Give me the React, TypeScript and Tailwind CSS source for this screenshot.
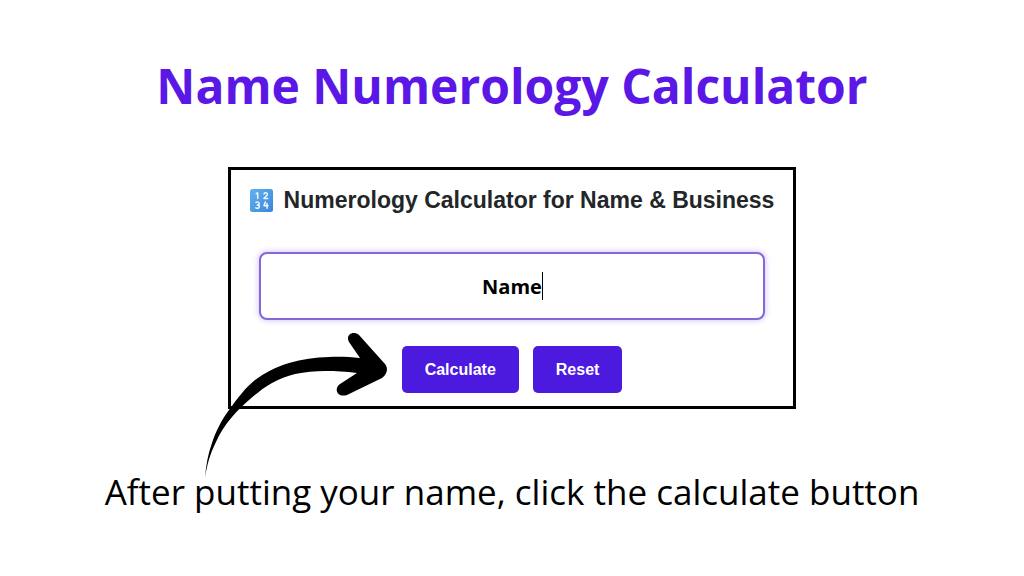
import { useState } from 'react'

export default function App() {
  const [name, setName] = useState('Name')

  return (
    <main className="min-h-screen bg-white flex flex-col items-center pt-[54px] font-['Open_Sans',sans-serif]">
      <h1 className="text-[48px] leading-16 font-bold text-[#5b17e5] whitespace-nowrap">
        Name Numerology Calculator
      </h1>

      <div className="relative mt-[49px] w-5/9">
        <Calculator name={name} onChange={setName} />
        <CurvedArrow />
      </div>

      <p className="mt-[59px] text-[35px] leading-12 text-black whitespace-nowrap">
        After putting your name, click the calculate button
      </p>
    </main>
  )
}

interface CalculatorProps {
  name: string
  onChange: (name: string) => void
}

function Calculator({ name, onChange }: CalculatorProps) {
  return (
    <form
      className="border-3 border-black px-7 pt-4 pb-[13px] font-['Liberation_Sans',sans-serif]"
      onSubmit={e => e.preventDefault()}
    >
      <h2 className="flex items-center justify-center gap-[11px] text-[23px] leading-7 font-bold text-[#222628] whitespace-nowrap">
        <NumbersIcon />
        Numerology Calculator for Name &amp; Business
      </h2>

      <div className="relative mt-[38px]">
        <input
          aria-label="Name"
          className="block w-full h-[68px] rounded-lg border-2 border-[#8468d6] bg-white text-center text-[20px] font-bold text-black font-['Open_Sans',sans-serif] outline-none shadow-[0_0_6px_rgba(124,77,255,0.4)]"
          value={name}
          onChange={e => onChange(e.target.value)}
        />
        {/* text cursor after the typed name */}
        <div className="absolute inset-0 flex items-center justify-center pointer-events-none text-[20px] font-bold font-['Open_Sans',sans-serif]">
          <span className="invisible">{name}</span>
          <span className="relative">
            <span className="absolute -top-3.5 left-0 w-px h-7 bg-black" />
          </span>
        </div>
      </div>

      <div className="mt-[26px] flex justify-center gap-3.5 text-base font-bold text-white">
        <button type="submit" className="h-[47px] px-[23px] rounded-[5px] bg-[#4c1adf]">
          Calculate
        </button>
        <button type="button" className="h-[47px] px-[23px] rounded-[5px] bg-[#4c1adf]" onClick={() => onChange('')}>
          Reset
        </button>
      </div>
    </form>
  )
}

function NumbersIcon() {
  return (
    <svg className="size-[23px] shrink-0" viewBox="0 0 23 23" fill="none" aria-hidden="true">
      <defs>
        <linearGradient id="keycap" x1="0" y1="0" x2="1" y2="1">
          <stop offset="0" stopColor="#64b2ef" />
          <stop offset="1" stopColor="#3a86da" />
        </linearGradient>
      </defs>
      <rect width="23" height="23" rx="2.5" fill="url(#keycap)" />
      <g stroke="#eef6ff" strokeWidth="1.5" strokeLinecap="round" strokeLinejoin="round">
        <path d="M6.2 4.7 7.7 3.8V9.5" />
        <path d="M14 5C14.2 3.2 17.5 3.2 17.5 5.3 17.5 7 14 8 14 9.5H17.8" />
        <path d="M6 13.3C7.2 12.7 9.2 13 9.2 14.5 9.2 16 7.2 16 7.2 16 7.2 16 9.4 16 9.4 17.6 9.4 19.4 7.2 19.6 5.8 18.8" />
        <path d="M15.3 13 14 16.8H18M17 14.5V19.3" />
      </g>
    </svg>
  )
}

function CurvedArrow() {
  return (
    <svg
      className="absolute left-[-24px] top-[164px] w-[184px] h-[150px] pointer-events-none"
      viewBox="0 0 184 150"
      aria-hidden="true"
    >
      <path
        d="M1 147C2 134 4 123 8 112C12 100 17 90 25 79C33 68 41 57 51 49C62 41 72 36 85 32C98 28 111 26.5 125 26C136 25.6 146 26 156 27L145 11C141 4 149-1 155 4L181 33C184 37 184 42 178 47L143 64C134 67 129 58 136 53L153 42C142 40.5 132 40 121 40C111 40 101 41 91 43C83 45 75 48 68 52C59 57 52 63 45 69C39 74 33 80 28 86C21 94 16 102 11.5 112C6 123 3 134 1 147Z"
        fill="#000"
      />
    </svg>
  )
}
